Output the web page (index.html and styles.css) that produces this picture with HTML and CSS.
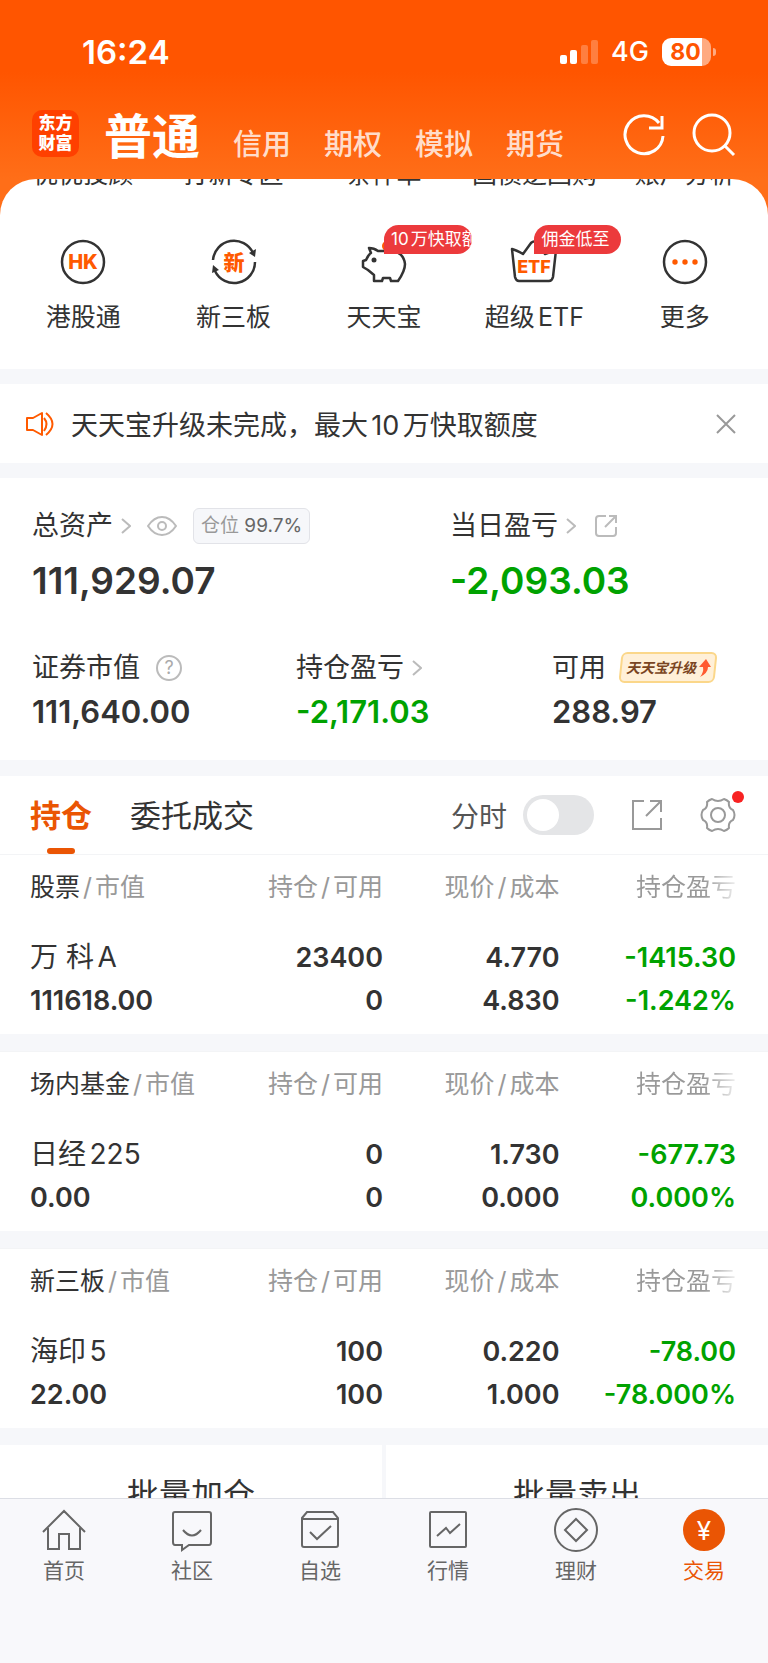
FILE: index.html
```
<!DOCTYPE html>
<html lang="zh-CN">
<head>
    <meta charset="UTF-8">
    <meta name="viewport" content="width=device-width, initial-scale=1.0">
    <title>交易</title>
    <link rel="stylesheet" href="styles.css">
</head>
<body>

    <header class="header">
        <div class="status">
            <span class="time">16:24</span>
            <div class="status-right">
                <svg class="signal" width="38" height="24" viewBox="0 0 38 24" fill="#fff">
                    <rect x="0" y="15" width="7" height="9" rx="2"/>
                    <rect x="10" y="10" width="7" height="14" rx="2"/>
                    <rect x="21" y="5" width="7" height="19" rx="2" opacity=".25"/>
                    <rect x="31" y="0" width="7" height="24" rx="2" opacity=".25"/>
                </svg>
                <span class="network">4G</span>
                <div class="battery">80</div>
            </div>
        </div>
        <div class="header-bar">
            <div class="logo">东方<br>财富</div>
            <nav class="accounts">
                <a href="#" class="current">普通</a>
                <a href="#">信用</a>
                <a href="#">期权</a>
                <a href="#">模拟</a>
                <a href="#">期货</a>
            </nav>
            <div class="header-actions">
                <button aria-label="刷新">
                    <svg width="44" height="44" viewBox="0 0 44 44" fill="none" stroke="#fff" stroke-width="3">
                        <path d="M41 23A19 19 0 1 1 37 10"/>
                        <path d="M40 3V15H27"/>
                    </svg>
                </button>
                <button aria-label="搜索">
                    <svg width="44" height="44" viewBox="0 0 44 44" fill="none" stroke="#fff" stroke-width="3">
                        <circle cx="20" cy="20" r="18"/>
                        <path d="M32 32L42 42"/>
                    </svg>
                </button>
            </div>
        </div>
    </header>

    <main class="content">
        <section class="sheet">
            <div class="entries hidden-row">
                <a href="#">优优投顾</a>
                <a href="#">打新专区</a>
                <a href="#">条件单</a>
                <a href="#">国债逆回购</a>
                <a href="#">账户分析</a>
            </div>
            <div class="entries">
                <a href="#" class="entry">
                    <svg width="48" height="48" viewBox="0 0 48 48">
                        <circle cx="24" cy="24" r="21" fill="none" stroke="#333" stroke-width="2.5"/>
                        <text x="24" y="31" text-anchor="middle" class="icon-text hk">HK</text>
                    </svg>
                    <span>港股通</span>
                </a>
                <a href="#" class="entry">
                    <svg width="48" height="48" viewBox="0 0 48 48">
                        <g fill="none" stroke="#333" stroke-width="2.5">
                            <path d="M3 22A21 21 0 0 1 43 15"/>
                            <path d="M45 24A21 21 0 0 1 5 33"/>
                        </g>
                        <path d="M39 15L46 11L45 19Z M2 35L3 27L9 32Z" fill="#333"/>
                        <text x="24" y="32" text-anchor="middle" class="icon-text xin">新</text>
                    </svg>
                    <span>新三板</span>
                </a>
                <a href="#" class="entry">
                    <svg width="48" height="48" viewBox="0 0 48 48">
                        <circle cx="27" cy="8" r="5" fill="#ff5a00"/>
                        <path d="M9 10Q14 10 18 13H34Q44 16 45 26Q45 33 38 43H31L30 40H23L22 43H14V37L8 32L3 29V23L6 22Q8 17 11 15Z" fill="#fff" stroke="#333" stroke-width="2.5" stroke-linejoin="round"/>
                        <circle cx="14" cy="22" r="2.5" fill="#333"/>
                    </svg>
                    <span>天天宝</span>
                    <em class="tag">10万快取额</em>
                </a>
                <a href="#" class="entry">
                    <svg width="48" height="48" viewBox="0 0 48 48">
                        <path d="M2 11Q6 12 13 16L21 5Q24 2 27 5L35 16L46 12L43 39Q42 43 39 43H9Q6 43 5 39Z" fill="#fff" stroke="#333" stroke-width="2.5" stroke-linejoin="round"/>
                        <text x="24" y="35" text-anchor="middle" class="icon-text etf">ETF</text>
                    </svg>
                    <span>超级ETF</span>
                    <em class="tag">佣金低至</em>
                </a>
                <a href="#" class="entry">
                    <svg width="48" height="48" viewBox="0 0 48 48">
                        <circle cx="24" cy="24" r="21" fill="none" stroke="#333" stroke-width="2.5"/>
                        <g fill="#ff5a00">
                            <circle cx="14" cy="24" r="2.7"/>
                            <circle cx="24" cy="24" r="2.7"/>
                            <circle cx="34" cy="24" r="2.7"/>
                        </g>
                    </svg>
                    <span>更多</span>
                </a>
            </div>
        </section>

        <section class="notice">
            <svg width="28" height="26" viewBox="0 0 28 26" fill="none" stroke="#ff5a00" stroke-width="2">
                <path d="M1 7H7L16 2V24L7 19H1Z" stroke-linejoin="round"/>
                <path d="M18 7Q23 13 18 20"/>
                <path d="M20 2Q33 13 20 24"/>
            </svg>
            <p>天天宝升级未完成，最大10万快取额度</p>
            <button aria-label="关闭">
                <svg width="20" height="20" viewBox="0 0 20 20" fill="none" stroke="#999" stroke-width="2">
                    <path d="M1 1L19 19M19 1L1 19"/>
                </svg>
            </button>
        </section>

        <section class="assets">
            <div class="assets-main">
                <div>
                    <div class="label">
                        总资产
                        <svg class="arrow" width="10" height="16" viewBox="0 0 10 16"><path d="M1 1L9 8L1 15"/></svg>
                        <svg class="eye" width="30" height="20" viewBox="0 0 30 20"><path d="M1 10Q7 1 15 1T29 10Q23 19 15 19T1 10Z"/><circle cx="15" cy="10" r="4"/></svg>
                        <span class="position">仓位 <b>99.7%</b></span>
                    </div>
                    <div class="value">111,929.07</div>
                </div>
                <div>
                    <div class="label">
                        当日盈亏
                        <svg class="arrow" width="10" height="16" viewBox="0 0 10 16"><path d="M1 1L9 8L1 15"/></svg>
                        <svg class="share" width="24" height="24" viewBox="0 0 24 24"><path d="M12 2H5Q2 2 2 5V19Q2 22 5 22H19Q22 22 22 19V13"/><path d="M11 13L22 2M15 2H22V9"/></svg>
                    </div>
                    <div class="value down">-2,093.03</div>
                </div>
            </div>
            <div class="assets-sub">
                <div>
                    <div class="label">
                        证券市值
                        <svg class="help" width="26" height="26" viewBox="0 0 26 26"><circle cx="13" cy="13" r="12"/><text x="13" y="19" text-anchor="middle">?</text></svg>
                    </div>
                    <div class="value">111,640.00</div>
                </div>
                <div>
                    <div class="label">
                        持仓盈亏
                        <svg class="arrow" width="10" height="16" viewBox="0 0 10 16"><path d="M1 1L9 8L1 15"/></svg>
                    </div>
                    <div class="value down">-2,171.03</div>
                </div>
                <div>
                    <div class="label">
                        可用
                        <a href="#" class="upgrade">天天宝升级<svg width="13" height="18" viewBox="0 0 13 18"><path d="M8 0L13 8H10Q10 14 2 18Q6 13 5 8H1Z" fill="#ff5a30"/></svg></a>
                    </div>
                    <div class="value">288.97</div>
                </div>
            </div>
        </section>

        <section class="holdings">
            <div class="tabs">
                <button class="tab active">持仓</button>
                <button class="tab">委托成交</button>
                <label class="switch-label" for="minute">分时</label>
                <input type="checkbox" id="minute" class="switch">
                <button class="tool" aria-label="分享">
                    <svg width="32" height="32" viewBox="0 0 32 32" fill="none" stroke="#999" stroke-width="2">
                        <path d="M13 2H2V30H30V19"/>
                        <path d="M15 17L30 2M19 2H30V13"/>
                    </svg>
                </button>
                <button class="tool gear" aria-label="设置">
                    <svg width="36" height="36" viewBox="0 0 36 36" fill="none" stroke="#999" stroke-width="2" stroke-linejoin="round">
                        <path d="M12 2Q18 6 24 2Q27 3 29 5Q28 11 33 13Q36 18 33 23Q28 25 29 31Q27 33 24 34Q18 30 12 34Q9 33 7 31Q8 25 3 23Q0 18 3 13Q8 11 7 5Q9 3 12 2Z"/>
                        <circle cx="18" cy="18" r="7"/>
                    </svg>
                </button>
            </div>

            <table class="group">
                <thead>
                    <tr><th><b>股票</b><i>/</i>市值</th><th>持仓<i>/</i>可用</th><th>现价<i>/</i>成本</th><th class="fade">持仓盈亏</th></tr>
                </thead>
                <tbody>
                    <tr><td class="name">万 科A</td><td>23400</td><td>4.770</td><td class="down">-1415.30</td></tr>
                    <tr><td>111618.00</td><td>0</td><td>4.830</td><td class="down">-1.242%</td></tr>
                </tbody>
            </table>

            <table class="group">
                <thead>
                    <tr><th><b>场内基金</b><i>/</i>市值</th><th>持仓<i>/</i>可用</th><th>现价<i>/</i>成本</th><th class="fade">持仓盈亏</th></tr>
                </thead>
                <tbody>
                    <tr><td class="name">日经225</td><td>0</td><td>1.730</td><td class="down">-677.73</td></tr>
                    <tr><td>0.00</td><td>0</td><td>0.000</td><td class="down">0.000%</td></tr>
                </tbody>
            </table>

            <table class="group">
                <thead>
                    <tr><th><b>新三板</b><i>/</i>市值</th><th>持仓<i>/</i>可用</th><th>现价<i>/</i>成本</th><th class="fade">持仓盈亏</th></tr>
                </thead>
                <tbody>
                    <tr><td class="name">海印5</td><td>100</td><td>0.220</td><td class="down">-78.00</td></tr>
                    <tr><td>22.00</td><td>100</td><td>1.000</td><td class="down">-78.000%</td></tr>
                </tbody>
            </table>
        </section>

        <div class="batch">
            <button>批量加仓</button>
            <button>批量卖出</button>
        </div>
    </main>

    <nav class="tabbar">
        <a href="#">
            <svg width="44" height="44" viewBox="0 0 44 44">
                <path d="M1 24L22 3L43 24M6 20V41H17V26H27V41H38V20"/>
            </svg>
            首页
        </a>
        <a href="#">
            <svg width="44" height="44" viewBox="0 0 44 44">
                <path d="M5 4H39Q41 4 41 6V34Q41 37 39 37H19L12 42V37H5Q3 37 3 34V6Q3 4 5 4Z"/>
                <path d="M13 22Q22 33 31 22"/>
            </svg>
            社区
        </a>
        <a href="#">
            <svg width="44" height="44" viewBox="0 0 44 44">
                <path d="M4 10L9 4H35L40 10V37Q40 39 38 39H6Q4 39 4 37ZM4 11H40M12 24L19 31L33 18"/>
            </svg>
            自选
        </a>
        <a href="#">
            <svg width="44" height="44" viewBox="0 0 44 44">
                <rect x="4" y="4" width="36" height="35" rx="1"/>
                <path d="M11 28L20 20L24 25L34 16"/>
            </svg>
            行情
        </a>
        <a href="#">
            <svg width="44" height="44" viewBox="0 0 44 44">
                <circle cx="22" cy="22" r="21"/>
                <path d="M22 11L33 22L22 33L11 22Z"/>
            </svg>
            理财
        </a>
        <a href="#" class="active">
            <svg width="44" height="44" viewBox="0 0 44 44">
                <circle class="disc" cx="22" cy="22" r="21"/>
                <text x="22" y="32" text-anchor="middle">¥</text>
            </svg>
            交易
        </a>
    </nav>

</body>
</html>
```
FILE: styles.css
```
* {
    box-sizing: border-box;
}

body {
    font-family: Inter, 'Noto Sans CJK SC', sans-serif;
    text-autospace: normal;
    margin: 0;
    height: 100vh;
    display: flex;
    flex-direction: column;
    overflow: hidden;
    color: #333;
    background-color: #f6f7fa;
}

a {
    color: inherit;
    text-decoration: none;
}

button {
    font: inherit;
    color: inherit;
    background: none;
    border: none;
    padding: 0;
}

svg {
    display: block;
    flex-shrink: 0;
}

.down {
    color: #00a200;
}

/* header */
.header {
    background: linear-gradient(#ff5500 40%, #ff6e18);
    color: white;
    height: 179px;
    flex-shrink: 0;
}

.status {
    display: flex;
    justify-content: space-between;
    align-items: center;
    padding: 32px 52px 0 82px;
    height: 71px;
}

.time {
    font-size: 33px;
    font-weight: 600;
}

.status-right {
    display: flex;
    align-items: center;
}

.network {
    font-size: 27px;
    font-weight: 500;
    margin: 0 13px;
}

.battery {
    width: 49px;
    height: 28px;
    line-height: 28px;
    margin-right: 5px;
    padding-right: 2px;
    border-radius: 9px;
    background: linear-gradient(to right, #fff 82%, #ffaa80 82%);
    color: #ff5500;
    font-size: 23px;
    font-weight: 700;
    text-align: center;
    position: relative;
}

.battery::after {
    content: "";
    position: absolute;
    right: -5px;
    top: 10px;
    width: 3px;
    height: 8px;
    border-radius: 0 4px 4px 0;
    background-color: #ffaa80;
}

.header-bar {
    display: flex;
    align-items: center;
    height: 108px;
    padding: 16px 32px 0 32px;
}

.logo {
    width: 47px;
    height: 47px;
    padding-top: 3px;
    border-radius: 10px;
    background-color: #ff4000;
    font-size: 17px;
    line-height: 20px;
    font-weight: 900;
    text-align: center;
}

.accounts {
    display: flex;
    align-items: flex-end;
    gap: 33px;
    margin-left: 25px;
    padding-top: 7px;
    font-size: 29px;
    font-weight: 500;
    line-height: 40px;
    color: rgba(255, 255, 255, 0.8);
}

.accounts .current {
    font-size: 48px;
    line-height: 56px;
    font-weight: 700;
    color: white;
}

.header-actions {
    display: flex;
    gap: 26px;
    margin-left: auto;
    padding-top: 3px;
}

/* entries */
.content {
    flex: 1;
    min-height: 0;
    overflow: hidden;
    background: linear-gradient(#ff6e18 60px, #f6f7fa 60px);
}

.sheet {
    background-color: white;
    border-radius: 36px 36px 0 0;
    overflow: hidden;
    height: 190px;
    margin-bottom: 15px;
}

.entries {
    display: grid;
    grid-template-columns: repeat(5, 1fr);
    padding: 0 8px;
    font-size: 25px;
    line-height: 30px;
    text-align: center;
    white-space: nowrap;
}

.hidden-row {
    margin-top: -20px;
    margin-bottom: 49px;
}

.entry {
    display: flex;
    flex-direction: column;
    align-items: center;
    gap: 16px;
    position: relative;
}

.icon-text {
    fill: #ff5a00;
    font-weight: 800;
}

.hk {
    font-size: 20px;
}

.xin {
    font-size: 21px;
}

.etf {
    font-size: 18px;
}

.tag {
    position: absolute;
    left: 50%;
    top: -13px;
    max-width: 88px;
    height: 29px;
    line-height: 29px;
    padding: 0 12px 0 7px;
    border-radius: 15px 15px 15px 0;
    background-color: #ec3a3c;
    color: white;
    font-size: 17px;
    font-style: normal;
    overflow: hidden;
}

/* notice */
.notice {
    display: flex;
    align-items: center;
    height: 79px;
    margin-bottom: 15px;
    padding: 0 32px 0 26px;
    background-color: white;
    font-size: 27px;
}

.notice p {
    flex: 1;
    margin: 0 0 0 17px;
}

/* assets */
.assets {
    background-color: white;
    height: 282px;
    margin-bottom: 16px;
    padding: 28px 34px 0 32px;
}

.assets-main {
    display: grid;
    grid-template-columns: 418fr 284fr;
    margin-bottom: 33px;
}

.assets-sub {
    display: grid;
    grid-template-columns: 264fr 256fr 182fr;
}

.label {
    display: flex;
    align-items: center;
    height: 40px;
    font-size: 27px;
    line-height: 36px;
    padding-bottom: 1px;
    white-space: nowrap;
}

.label svg {
    fill: none;
    stroke: #bbb;
    stroke-width: 2;
}

.arrow {
    margin-left: 8px;
}

.eye {
    margin-left: 16px;
}

.share {
    margin-left: 18px;
}

.help {
    margin-left: 16px;
}

.help text {
    fill: #aaa;
    stroke: none;
    font-size: 18px;
}

.position {
    height: 36px;
    line-height: 34px;
    margin-left: 16px;
    padding: 0 7px;
    border: 1px solid #e2e3e8;
    border-radius: 6px;
    background-color: #f6f7fa;
    font-size: 19px;
    color: #999;
}

.position b {
    font-weight: 400;
    color: #666;
}

.value {
    font-weight: 600;
    white-space: nowrap;
}

.assets-main .value {
    font-size: 37px;
    line-height: 69px;
}

.assets-sub .value {
    font-size: 31px;
    line-height: 48px;
}

.upgrade {
    display: flex;
    align-items: center;
    gap: 2px;
    height: 31px;
    margin-left: 14px;
    padding: 0 5px 0 6px;
    position: relative;
    z-index: 0;
    font-size: 14px;
    font-weight: 700;
    font-style: italic;
    color: #7a4522;
}

.upgrade::before {
    content: "";
    position: absolute;
    inset: 0;
    z-index: -1;
    border: 2px solid #fbd78a;
    border-radius: 6px;
    background-color: #fff0d8;
    transform: skewX(-6deg);
}

.upgrade svg {
    stroke: none;
}

/* holdings */
.tabs {
    display: flex;
    align-items: center;
    height: 78px;
    padding: 0 32px 0 30px;
    background-color: white;
}

.tab {
    height: 78px;
    margin-right: 38px;
    padding-bottom: 4px;
    font-size: 31px;
    position: relative;
}

.tab.active {
    color: #ea5504;
    font-weight: 700;
}

.tab.active::after {
    content: "";
    position: absolute;
    left: 50%;
    bottom: 0;
    width: 28px;
    height: 6px;
    margin-left: -14px;
    border-radius: 3px;
    background-color: #ea5504;
}

.switch-label {
    margin-left: auto;
    font-size: 28px;
    color: #555;
}

.switch {
    appearance: none;
    width: 71px;
    height: 40px;
    margin: 0 37px 0 16px;
    padding: 4px;
    border-radius: 20px;
    background-color: #e4e5e7;
}

.switch::before {
    content: "";
    display: block;
    width: 32px;
    height: 32px;
    border-radius: 50%;
    background-color: white;
}

.switch:checked {
    background-color: #ea5504;
}

.switch:checked::before {
    margin-left: auto;
}

.gear {
    margin-left: 37px;
    position: relative;
}

.gear::after {
    content: "";
    position: absolute;
    right: -8px;
    top: -6px;
    width: 12px;
    height: 12px;
    border-radius: 50%;
    background-color: #f82222;
}

.group {
    width: 100%;
    height: 180px;
    table-layout: fixed;
    border-collapse: separate;
    border-spacing: 0;
    margin-bottom: 17px;
    padding: 0 32px 12px 30px;
    background-color: white;
    box-shadow: inset 0 1px #f3f4f6;
}

.group th,
.group td {
    padding: 0;
    text-align: right;
    white-space: nowrap;
}

.group th:first-child,
.group td:first-child {
    text-align: left;
}

.group th {
    height: 64px;
    padding-bottom: 2px;
    font-size: 25px;
    font-weight: 400;
    color: #999;
}

.group th b {
    font-weight: 400;
    color: #333;
}

.group th i {
    margin: 0 3px;
    font-style: normal;
}

.group .fade {
    color: transparent;
    background: linear-gradient(to right, #999 82%, #eee) text;
}

.group td {
    height: 43px;
    line-height: 43px;
    font-size: 27px;
    font-weight: 600;
}

.group tbody tr:first-child td {
    height: 61px;
    padding-top: 18px;
}

.group .name {
    font-size: 28px;
    font-weight: 400;
}

.batch {
    display: grid;
    grid-template-columns: 1fr 1fr;
    gap: 4px;
}

.batch button {
    height: 98px;
    padding-bottom: 4px;
    background-color: white;
    font-size: 32px;
}

/* bottom bar */
.tabbar {
    display: grid;
    grid-template-columns: repeat(6, 1fr);
    height: 165px;
    flex-shrink: 0;
    padding-top: 9px;
    border-top: 1px solid #dcdee5;
    background-color: #f8f8fb;
    font-size: 21px;
    line-height: 30px;
    color: #666;
}

.tabbar a {
    display: flex;
    flex-direction: column;
    align-items: center;
    gap: 4px;
}

.tabbar svg {
    fill: none;
    stroke: #666;
    stroke-width: 2;
}

.tabbar .active {
    color: #ea5504;
}

.tabbar .disc {
    fill: #ea5504;
    stroke: none;
}

.tabbar text {
    fill: white;
    stroke: none;
    font-size: 26px;
}
```
